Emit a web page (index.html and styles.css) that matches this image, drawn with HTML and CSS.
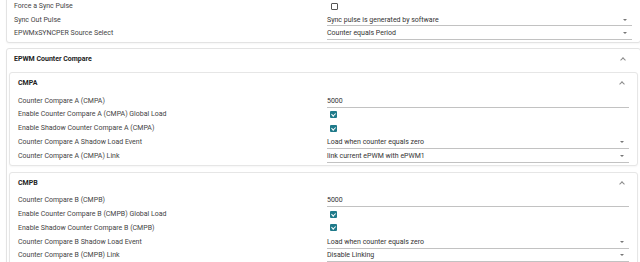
FILE: index.html
```html
<!DOCTYPE html>
<html lang="en">
<head>
  <meta charset="UTF-8">
  <title>EPWM</title>
  <link rel="stylesheet" href="styles.css">
</head>
<body>
  <div class="page">
    <section class="card card_top">
      <div class="row">
        <span class="label">Force a Sync Pulse</span>
        <span class="value"><span class="check"></span></span>
      </div>
      <div class="row">
        <span class="label">Sync Out Pulse</span>
        <span class="value select">Sync pulse is generated by software<span class="arrow"></span></span>
      </div>
      <div class="row">
        <span class="label">EPWMxSYNCPER Source Select</span>
        <span class="value select">Counter equals Period<span class="arrow"></span></span>
      </div>
    </section>

    <section class="card card_outer">
      <div class="head">
        <span class="title">EPWM Counter Compare</span>
        <span class="chevron"></span>
      </div>

      <section class="card card_inner">
        <div class="head">
          <span class="title">CMPA</span>
          <span class="chevron"></span>
        </div>
        <div class="row">
          <span class="label">Counter Compare A (CMPA)</span>
          <span class="value input">5000</span>
        </div>
        <div class="row">
          <span class="label">Enable Counter Compare A (CMPA) Global Load</span>
          <span class="value"><span class="check checked"></span></span>
        </div>
        <div class="row">
          <span class="label">Enable Shadow Counter Compare A (CMPA)</span>
          <span class="value"><span class="check checked"></span></span>
        </div>
        <div class="row">
          <span class="label">Counter Compare A Shadow Load Event</span>
          <span class="value select">Load when counter equals zero<span class="arrow"></span></span>
        </div>
        <div class="row">
          <span class="label">Counter Compare A (CMPA) Link</span>
          <span class="value select">link current ePWM with ePWM1<span class="arrow"></span></span>
        </div>
      </section>

      <section class="card card_inner">
        <div class="head">
          <span class="title">CMPB</span>
          <span class="chevron"></span>
        </div>
        <div class="row">
          <span class="label">Counter Compare B (CMPB)</span>
          <span class="value input">5000</span>
        </div>
        <div class="row">
          <span class="label">Enable Counter Compare B (CMPB) Global Load</span>
          <span class="value"><span class="check checked"></span></span>
        </div>
        <div class="row">
          <span class="label">Enable Shadow Counter Compare B (CMPB)</span>
          <span class="value"><span class="check checked"></span></span>
        </div>
        <div class="row">
          <span class="label">Counter Compare B Shadow Load Event</span>
          <span class="value select">Load when counter equals zero<span class="arrow"></span></span>
        </div>
        <div class="row">
          <span class="label">Counter Compare B (CMPB) Link</span>
          <span class="value select">Disable Linking<span class="arrow"></span></span>
        </div>
      </section>
    </section>
  </div>
</body>
</html>
```

FILE: styles.css
```css
:root {
  --text_color: #3a3a3a;
  --border_color: #e3e3e3;
  --accent: #1f7a8a;
}

html, body {
  margin: 0;
  overflow: hidden;
}

body {
  background-color: #ffffff;
  font-family: Roboto, "Liberation Sans", sans-serif;
  font-size: 7px;
  color: var(--text_color);
}

.page {
  padding-left: 6px;
  margin-right: -1px;
}

.card {
  border: 1px solid var(--border_color);
  border-radius: 3px;
  background-color: #ffffff;
  box-shadow: 0 1px 2px rgba(0, 0, 0, 0.04);
}

.card_top {
  margin-top: -12px;
  padding: 10.25px 8px 2px 7px;
}

.card_top .row {
  height: 13.5px;
  grid-template-columns: 313px 1fr;
}

.card_outer {
  margin-top: 5px;
  padding: 0 2px;
}

.card_outer > .head {
  height: 20px;
  padding: 0 13px 0 5px;
}

.card_inner {
  margin: 3px 0 6px 0;
  padding: 0 8px 2px 8px;
  border-color: #e6e6e6;
}

.card_inner > .head {
  height: 21px;
  padding: 0 5px 0 0;
}

.head {
  display: flex;
  align-items: center;
  justify-content: space-between;
}

.title {
  font-weight: bold;
  color: #222222;
}

.chevron {
  width: 3px;
  height: 3px;
  border-left: 1px solid #8a8a8a;
  border-top: 1px solid #8a8a8a;
  transform: rotate(45deg);
  margin-top: 2px;
}

.row {
  display: grid;
  grid-template-columns: 309px 1fr;
  align-items: center;
  height: 13.75px;
}

.label {
  color: #444444;
  white-space: nowrap;
}

.value {
  height: 100%;
  display: flex;
  align-items: center;
  white-space: nowrap;
  box-sizing: border-box;
}

.select,
.input {
  border-bottom: 1px solid #c2c2c2;
  height: calc(100% - 1px);
  margin-top: 1px;
  color: #333333;
}

.select {
  justify-content: space-between;
  padding-right: 5px;
}

.arrow {
  width: 0;
  height: 0;
  border-left: 2px solid transparent;
  border-right: 2px solid transparent;
  border-top: 2.5px solid #777777;
}

.check {
  width: 5px;
  height: 5px;
  margin-left: 4px;
  border: 1px solid #555555;
  border-radius: 1px;
  position: relative;
}

.check.checked {
  width: 7px;
  height: 7px;
  margin-left: 3px;
  border: 0;
  background-color: var(--accent);
}

.check.checked::after {
  content: "";
  position: absolute;
  left: 2.4px;
  top: 0.9px;
  width: 1.6px;
  height: 3.4px;
  border-right: 1px solid #ffffff;
  border-bottom: 1px solid #ffffff;
  transform: rotate(45deg);
}
```
